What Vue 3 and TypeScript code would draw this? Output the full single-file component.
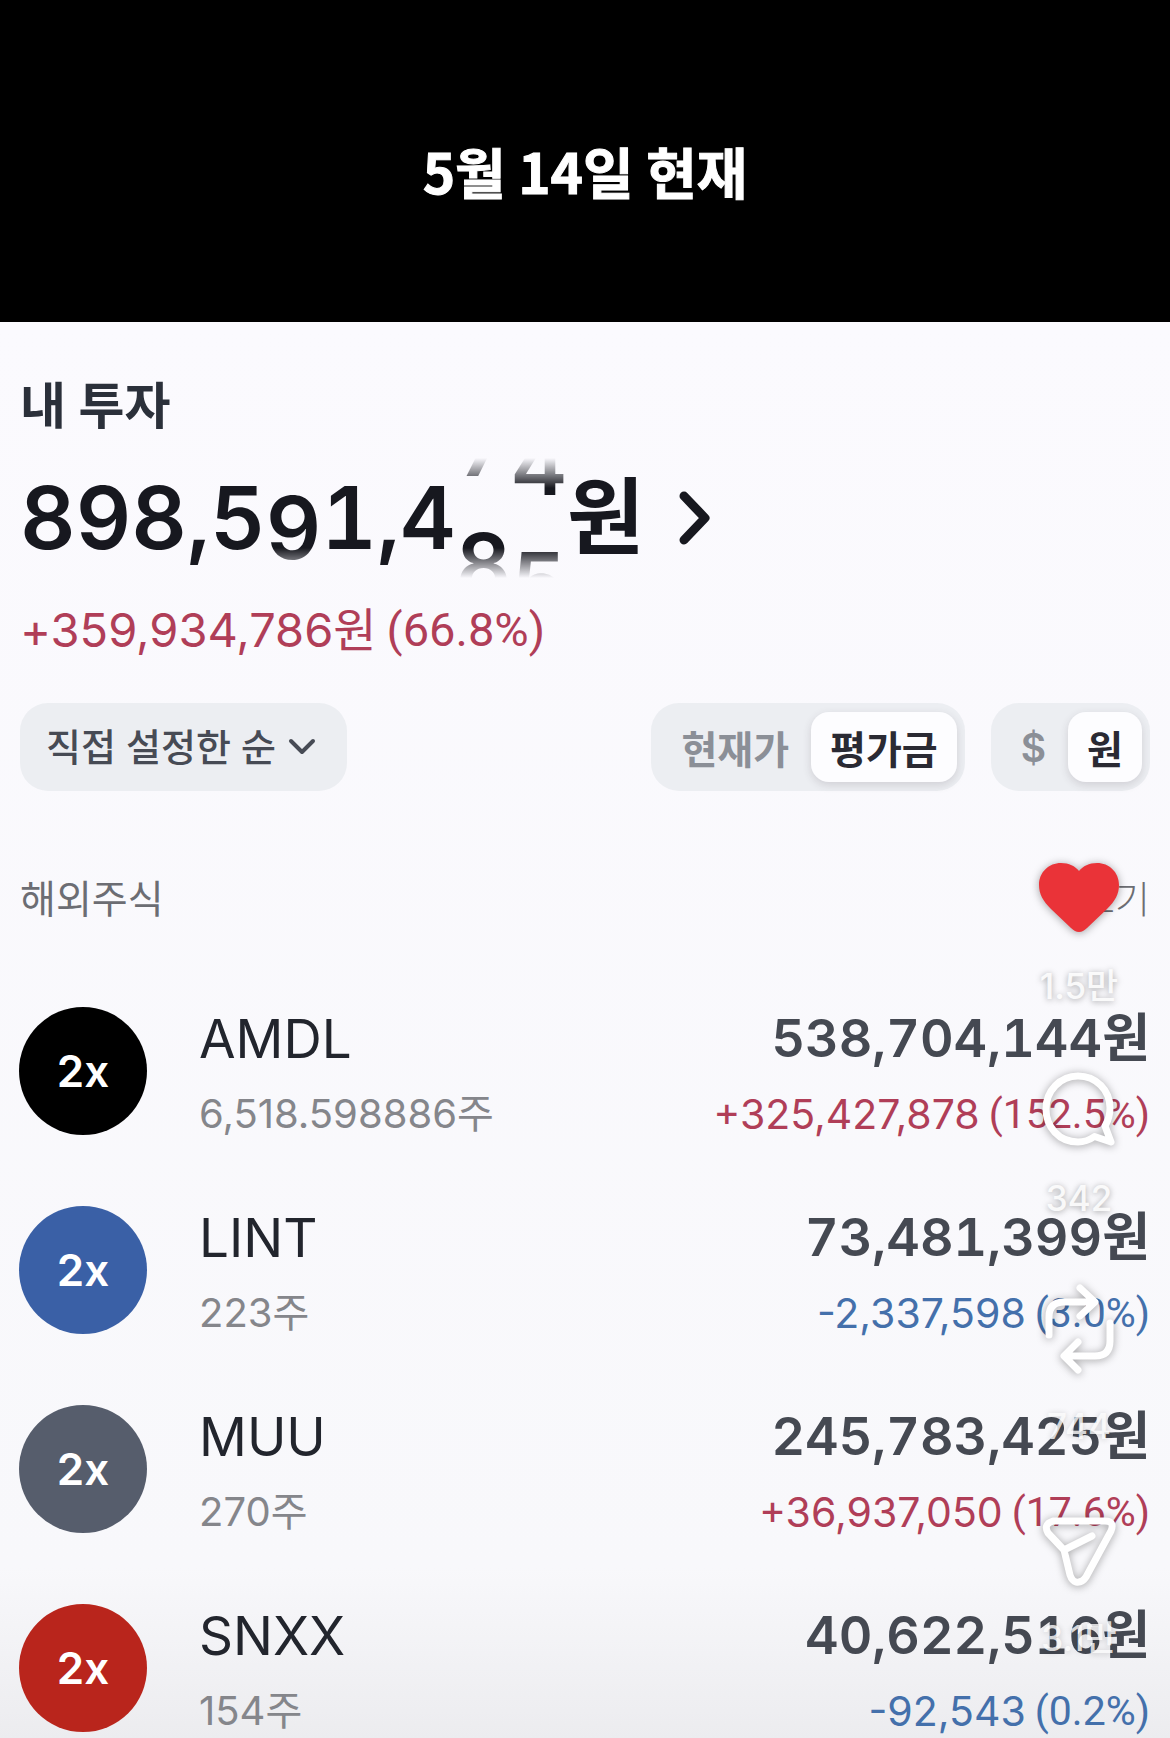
<script setup lang="ts">
import { ref } from 'vue'

interface Reel {
  glyphs: string[]
  shift: number
}

interface Holding {
  ticker: string
  shares: string
  value: string
  change: string
  rate: string
  up: boolean
  tone: string
}

// Each reel shows its glyphs stacked one line apart; shift is how far the reel has rolled.
const reels: Reel[] = [
  { glyphs: ['8'], shift: 0 },
  { glyphs: ['9'], shift: 0 },
  { glyphs: ['8'], shift: 0 },
  { glyphs: [','], shift: 0 },
  { glyphs: ['5'], shift: 0 },
  { glyphs: ['9'], shift: 10 },
  { glyphs: ['1'], shift: 0 },
  { glyphs: [','], shift: 0 },
  { glyphs: ['4'], shift: 0 },
  { glyphs: ['7', '8'], shift: -73 },
  { glyphs: ['4', '5'], shift: -54 },
]

const holdings: Holding[] = [
  { ticker: 'AMDL', shares: '6,518.598886', value: '538,704,144', change: '+325,427,878', rate: '(152.5%)', up: true, tone: 'black' },
  { ticker: 'LINT', shares: '223', value: '73,481,399', change: '-2,337,598', rate: '(3.0%)', up: false, tone: 'blue' },
  { ticker: 'MUU', shares: '270', value: '245,783,425', change: '+36,937,050', rate: '(17.6%)', up: true, tone: 'slate' },
  { ticker: 'SNXX', shares: '154', value: '40,622,516', change: '-92,543', rate: '(0.2%)', up: false, tone: 'red' },
]

const order = ref('custom')
const priceModes = ['현재가', '평가금']
const currencies = ['$', '원']
const priceMode = ref('평가금')
const currency = ref('원')
</script>

<template>
  <main class="app">
    <header class="caption">
      <h1>5월 14일 현재</h1>
    </header>

    <section class="panel">
      <h2 class="title">내 투자</h2>
      <div class="total">
        <span v-for="(reel, i) in reels" :key="i" class="reel" :class="{ rolling: reel.shift !== 0 }">
          <span class="strip" :style="{ transform: `translateY(${reel.shift}px)` }">
            <span v-for="glyph in reel.glyphs" :key="glyph" class="glyph">{{ glyph }}</span>
          </span>
        </span>
        <span class="total-unit">원</span>
        <button class="more" type="button" aria-label="자세히">
          <svg width="34" height="56" viewBox="0 0 34 56" fill="none">
            <path d="M6 6 L27 28 L6 50" stroke="#17181f" stroke-width="9" stroke-linecap="round" stroke-linejoin="round" />
          </svg>
        </button>
      </div>
      <p class="profit"><span>+359,934,786<span class="unit">원</span></span><span class="rate">(66.8%)</span></p>

      <div class="controls">
        <div class="order">
          <select v-model="order" aria-label="정렬">
            <option value="custom">직접 설정한 순</option>
          </select>
          <svg class="order-arrow" width="30" height="20" viewBox="0 0 30 20" fill="none">
            <path d="M4 4 L15 15 L26 4" stroke="#474b55" stroke-width="4" stroke-linecap="round" stroke-linejoin="round" />
          </svg>
        </div>
        <div class="segment">
          <button v-for="mode in priceModes" :key="mode" type="button" :class="{ on: priceMode === mode }" :aria-pressed="priceMode === mode" @click="priceMode = mode">{{ mode }}</button>
        </div>
        <div class="segment">
          <button v-for="unit in currencies" :key="unit" type="button" :class="{ on: currency === unit }" :aria-pressed="currency === unit" @click="currency = unit">{{ unit }}</button>
        </div>
      </div>

      <div class="section-head">
        <h3>해외주식</h3>
        <a href="#">보기</a>
      </div>

      <ul class="holdings">
        <li v-for="item in holdings" :key="item.ticker">
          <span class="badge" :class="item.tone">2x</span>
          <div class="left">
            <span class="ticker">{{ item.ticker }}</span>
            <span class="shares">{{ item.shares }}<span class="unit">주</span></span>
          </div>
          <div class="right">
            <span class="value">{{ item.value }}<span class="unit">원</span></span>
            <span class="change" :class="item.up ? 'up' : 'down'"><span>{{ item.change }}</span><span class="rate">{{ item.rate }}</span></span>
          </div>
        </li>
      </ul>

      <aside class="rail">
        <button type="button" aria-label="좋아요">
          <svg width="80" height="72" viewBox="0 0 80 72">
            <path d="M40 71 C37 71 35 69.500 32 67 L12 48 C4 40 0 33 0 24 C0 11 10 2 22 2 C30 2 36 5 40 10 C44 5 50 2 58 2 C70 2 80 11 80 24 C80 33 76 40 68 48 L48 67 C45 69.500 43 71 40 71 Z" fill="#ea3338" />
          </svg>
          <span>1.5만</span>
        </button>
        <button type="button" aria-label="댓글">
          <svg width="80" height="72" viewBox="0 0 80 72" fill="none" stroke="#fff" stroke-width="7" stroke-linejoin="round">
            <path d="M55.500 63.500 C50.500 67 45 69 39 69 C20 69 7 54 7 36 C7 18 21 3 39 3 C57 3 71 17 71 35 C71 42 69 48 66 53 L72 69 Z" />
          </svg>
          <span>342</span>
        </button>
        <button type="button" aria-label="리포스트">
          <svg width="80" height="88" viewBox="0 0 80 88" fill="none" stroke="#fff" stroke-width="7" stroke-linecap="round" stroke-linejoin="round">
            <path d="M10 50 V32 Q10 17 25 17 H54 M41 3 L56 17 L41 31" />
            <path d="M71 38 V56 Q71 71 56 71 H26 M39 57 L25 71 L39 85" />
          </svg>
          <span class="faint">744</span>
        </button>
        <button type="button" aria-label="공유">
          <svg width="80" height="72" viewBox="0 0 80 72" fill="none" stroke="#fff" stroke-width="7" stroke-linecap="round" stroke-linejoin="round">
            <path d="M14 8 H66 Q76 8 72 18 L47 64 Q43 70 37 69 Q33 68 31 62 L25 37 L9 20 Q4 11 14 8 Z M25 37 L53 23" />
          </svg>
          <span class="faint">3.1만</span>
        </button>
      </aside>
    </section>
  </main>
</template>

<style>
body {
  margin: 0;
  background: #000;
}
</style>

<style scoped>
.app {
  display: flex;
  flex-direction: column;
  min-height: 100vh;
  font-family: Inter, "Noto Sans CJK KR", sans-serif;
  color: #17181f;
}

h1,
h2,
h3,
p,
ul {
  margin: 0;
  padding: 0;
}

button {
  padding: 0;
  border: 0;
  background: none;
  font: inherit;
  color: inherit;
  cursor: pointer;
}

.caption {
  padding: 130px 24px 112px;
  background: #000;
  color: #fff;
  text-align: center;
}

.caption h1 {
  font-family: "Noto Sans CJK KR", sans-serif;
  font-size: 55px;
  line-height: 80px;
  font-weight: 700;
  -webkit-text-stroke: 1px #fff;
}

.panel {
  position: relative;
  flex: 1;
  padding: 54px 20px 0;
  background: linear-gradient(to bottom, #fbfafe 0, #f8f8fb 88%, #ececef 100%);
}

.title {
  font-size: 50px;
  line-height: 60px;
  font-weight: 600;
  color: #2b303a;
}

.total {
  display: flex;
  align-items: center;
  height: 120px;
  margin-top: 22px;
  font-size: 86px;
  line-height: 120px;
  font-weight: 600;
  font-variant-numeric: tabular-nums;
}

.reel {
  height: 120px;
}

.rolling {
  overflow: hidden;
  mask-image: linear-gradient(to bottom, transparent 0, #000 30px, #000 90px, transparent 120px);
}

.strip {
  display: flex;
  flex-direction: column;
}

.glyph {
  height: 120px;
}

.total-unit {
  font-size: 84px;
}

.more {
  display: flex;
  margin-left: 34px;
}

.profit {
  display: flex;
  gap: 10px;
  margin-top: 24px;
  font-size: 47px;
  line-height: 56px;
  color: #b03e58;
}

.rate {
  font-family: Roboto, sans-serif;
}

.unit {
  line-height: 1;
}

.controls {
  display: flex;
  align-items: center;
  gap: 26px;
  height: 88px;
  margin-top: 45px;
  font-size: 39px;
}

.order {
  position: relative;
  margin-right: auto;
}

.order select {
  height: 88px;
  padding: 0 70px 0 26px;
  border: 0;
  border-radius: 28px;
  background: #eceef2;
  color: #474b55;
  font: inherit;
  font-size: 38px;
  font-weight: 500;
  appearance: none;
}

.order-arrow {
  position: absolute;
  top: 34px;
  right: 30px;
  pointer-events: none;
}

.segment {
  display: flex;
  align-items: center;
  box-sizing: border-box;
  height: 88px;
  padding: 0 8px;
  border-radius: 28px;
  background: #eceef2;
}

.segment button {
  height: 70px;
  padding: 0 22px;
  border-radius: 18px;
  font-weight: 600;
  color: #8b8f97;
}

.segment button.on {
  padding: 0 19px;
  background: #fdfdff;
  box-shadow: 0 3px 8px rgba(60, 50, 60, 0.16);
  color: #2a2a33;
}

.section-head {
  display: flex;
  justify-content: space-between;
  margin-top: 84px;
  font-size: 38px;
  line-height: 48px;
  color: #6c6d73;
}

.section-head h3 {
  font-size: 39px;
  font-weight: 400;
}

.section-head a {
  color: inherit;
  font-weight: 300;
  text-decoration: none;
}

.holdings {
  display: flex;
  flex-direction: column;
  gap: 66px;
  margin: 84px 0 0 -1px;
  list-style: none;
}

.holdings li {
  display: flex;
  align-items: flex-start;
}

.badge {
  width: 128px;
  height: 128px;
  margin-right: 52px;
  border-radius: 50%;
  color: #fff;
  font-size: 44px;
  line-height: 128px;
  font-weight: 600;
  text-align: center;
}

.black {
  background: #000;
}

.blue {
  background: #3a60a6;
}

.slate {
  background: #565d6c;
}

.red {
  background: #b9251c;
}

.left,
.right {
  display: flex;
  flex-direction: column;
  gap: 19px;
  padding-top: 2px;
}

.right {
  flex: 1;
  align-items: flex-end;
}

.ticker,
.value {
  line-height: 60px;
}

.ticker {
  font-size: 53px;
  color: #22252d;
}

.value {
  font-size: 52px;
  font-weight: 600;
  font-variant-numeric: tabular-nums;
  color: #454952;
}

.shares,
.change {
  line-height: 52px;
}

.shares {
  font-size: 40px;
  color: #85868b;
}

.change {
  display: flex;
  gap: 9px;
  font-size: 41px;
}

.up {
  color: #b03e58;
}

.down {
  color: #4470ab;
}

.rail {
  position: absolute;
  top: 539px;
  right: 51px;
  display: flex;
  flex-direction: column;
  align-items: center;
  gap: 69px;
  width: 80px;
}

.rail button {
  display: flex;
  flex-direction: column;
  align-items: center;
  gap: 35px;
}

.rail svg {
  overflow: visible;
  filter: drop-shadow(0 1px 4px rgba(0, 0, 0, 0.35));
}

.rail span {
  font-size: 35px;
  line-height: 36px;
  font-weight: 500;
  color: rgba(255, 255, 255, 0.88);
  text-shadow: 0 1px 6px rgba(0, 0, 0, 0.35);
  white-space: nowrap;
}

.rail .faint {
  color: rgba(255, 255, 255, 0.8);
  text-shadow: 0 1px 6px rgba(0, 0, 0, 0.2);
}
</style>
